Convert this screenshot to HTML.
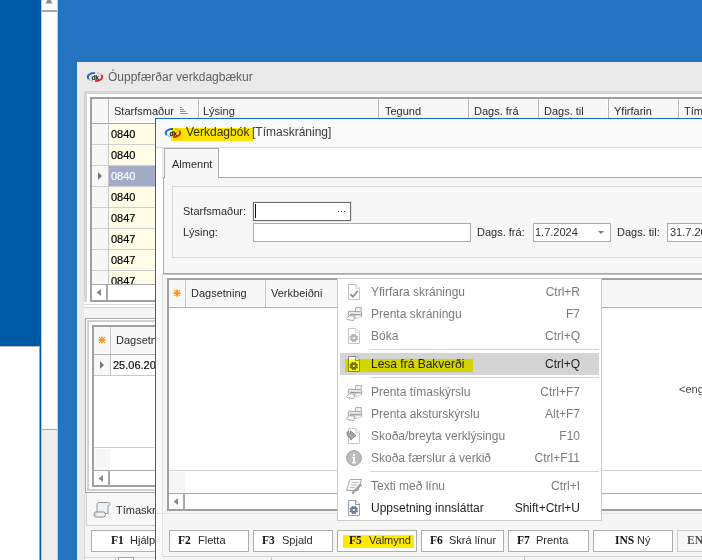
<!DOCTYPE html>
<html><head><meta charset="utf-8">
<style>
html,body{margin:0;padding:0;width:702px;height:560px;overflow:hidden;background:#2574c1;}
body{position:relative;font-family:"Liberation Sans",sans-serif;font-size:11px;color:#222;}
div{position:absolute;box-sizing:border-box;}
.t{white-space:nowrap;line-height:1;}
</style></head><body>
<div style="left:0px;top:0px;width:41px;height:560px;background:#0059a5;"></div>
<div style="left:0px;top:346px;width:40px;height:214px;background:#fff;border-top:1px solid #b8b8b8;border-right:1px solid #8ea6c0;"></div>
<div style="left:41px;top:0px;width:17px;height:560px;background:#fff;border-left:1px solid #cfc8c2;border-right:1px solid #cfc8c2;"></div>
<div style="left:42px;top:10px;width:15px;height:2px;background:#a6a6a6;"></div>
<div style="left:42px;top:429px;width:15px;height:131px;background:#efefef;border-top:1px solid #a6a6a6;"></div>
<svg style="position:absolute;left:45px;top:-3px" width="8" height="7"><path d="M4 0L7.5 6.5H0.5Z" fill="#8a8a8a"/></svg>
<div style="left:77px;top:62px;width:625px;height:498px;background:#eaeaea;"></div>
<svg style="position:absolute;left:86px;top:71px" width="18" height="12" viewBox="0 0 18 12">
<path d="M9 1.8 A7.2 4.2 0 0 0 2.76 8.1" fill="none" stroke="#1f62bd" stroke-width="1.8"/>
<path d="M2.76 8.1 A7.2 4.2 0 0 0 7 10.1" fill="none" stroke="#a8c0e6" stroke-width="1.2"/>
<path d="M9 10.2 A7.2 4.2 0 0 0 15.24 3.9" fill="none" stroke="#e3222b" stroke-width="1.8"/>
<path d="M15.24 3.9 A7.2 4.2 0 0 0 11 1.9" fill="none" stroke="#f2b0b0" stroke-width="1.2"/>
<text x="9" y="8.6" font-family="Liberation Sans" font-weight="bold" font-size="6.8" text-anchor="middle" letter-spacing="-0.4" fill="#151515">dk</text>
</svg>
<div class="t" style="left:108px;top:71px;font-size:12px;color:#5f5f5f;">Óuppfærðar verkdagbækur</div>
<div style="left:84px;top:91px;width:618px;height:217px;background:#d6d6d6;"></div>
<div style="left:87px;top:94px;width:615px;height:211px;background:#fff;"></div>
<div style="left:90px;top:97px;width:612px;height:205px;background:#a0a0a0;"></div>
<div style="left:92px;top:99px;width:610px;height:201px;background:#fff;"></div>
<div style="left:92px;top:99px;width:610px;height:24px;background:#f7f7f7;"></div>
<div style="left:92px;top:122px;width:610px;height:1px;background:#fff;"></div>
<div style="left:92px;top:123px;width:610px;height:1px;background:#a8a8a8;"></div>
<div style="left:107px;top:99px;width:3px;height:23px;background:#fff;"></div>
<div style="left:108px;top:99px;width:1px;height:24px;background:#b4b4b4;"></div>
<div style="left:197px;top:99px;width:3px;height:23px;background:#fff;"></div>
<div style="left:198px;top:99px;width:1px;height:24px;background:#b4b4b4;"></div>
<div style="left:377px;top:99px;width:3px;height:23px;background:#fff;"></div>
<div style="left:378px;top:99px;width:1px;height:24px;background:#b4b4b4;"></div>
<div style="left:467px;top:99px;width:3px;height:23px;background:#fff;"></div>
<div style="left:468px;top:99px;width:1px;height:24px;background:#b4b4b4;"></div>
<div style="left:537px;top:99px;width:3px;height:23px;background:#fff;"></div>
<div style="left:538px;top:99px;width:1px;height:24px;background:#b4b4b4;"></div>
<div style="left:607px;top:99px;width:3px;height:23px;background:#fff;"></div>
<div style="left:608px;top:99px;width:1px;height:24px;background:#b4b4b4;"></div>
<div style="left:677px;top:99px;width:3px;height:23px;background:#fff;"></div>
<div style="left:678px;top:99px;width:1px;height:24px;background:#b4b4b4;"></div>
<div class="t" style="left:114px;top:106px;font-size:11px;color:#2b2b2b;">Starfsmaður</div>
<div style="left:180px;top:107px;width:2px;height:1px;background:#8c8c8c;"></div>
<div style="left:180px;top:109px;width:4px;height:1px;background:#8c8c8c;"></div>
<div style="left:180px;top:111px;width:6px;height:1px;background:#8c8c8c;"></div>
<div style="left:180px;top:113px;width:8px;height:1px;background:#8c8c8c;"></div>
<div class="t" style="left:203px;top:106px;font-size:11px;color:#2b2b2b;">Lýsing</div>
<div class="t" style="left:385px;top:106px;font-size:11px;color:#2b2b2b;">Tegund</div>
<div class="t" style="left:474px;top:106px;font-size:11px;color:#2b2b2b;">Dags. frá</div>
<div class="t" style="left:544px;top:106px;font-size:11px;color:#2b2b2b;">Dags. til</div>
<div class="t" style="left:614px;top:106px;font-size:11px;color:#2b2b2b;">Yfirfarin</div>
<div class="t" style="left:684px;top:106px;font-size:11px;color:#2b2b2b;">Tíma</div>
<div style="left:92px;top:124px;width:16px;height:20px;background:#f7f7f7;"></div>
<div style="left:109px;top:124px;width:50px;height:20px;background:#fffde8;"></div>
<div class="t" style="left:111px;top:129px;font-size:11px;color:#000;-webkit-text-stroke:0.2px currentColor;">0840</div>
<div style="left:92px;top:145px;width:16px;height:20px;background:#f7f7f7;"></div>
<div style="left:109px;top:145px;width:50px;height:20px;background:#fffde8;"></div>
<div class="t" style="left:111px;top:150px;font-size:11px;color:#000;-webkit-text-stroke:0.2px currentColor;">0840</div>
<div style="left:92px;top:166px;width:16px;height:20px;background:#f7f7f7;"></div>
<div style="left:109px;top:166px;width:50px;height:20px;background:#a4abc9;"></div>
<div class="t" style="left:111px;top:171px;font-size:11px;color:#fff;-webkit-text-stroke:0.2px currentColor;">0840</div>
<div style="left:92px;top:187px;width:16px;height:20px;background:#f7f7f7;"></div>
<div style="left:109px;top:187px;width:50px;height:20px;background:#fffde8;"></div>
<div class="t" style="left:111px;top:192px;font-size:11px;color:#000;-webkit-text-stroke:0.2px currentColor;">0840</div>
<div style="left:92px;top:208px;width:16px;height:20px;background:#f7f7f7;"></div>
<div style="left:109px;top:208px;width:50px;height:20px;background:#fffde8;"></div>
<div class="t" style="left:111px;top:213px;font-size:11px;color:#000;-webkit-text-stroke:0.2px currentColor;">0847</div>
<div style="left:92px;top:229px;width:16px;height:20px;background:#f7f7f7;"></div>
<div style="left:109px;top:229px;width:50px;height:20px;background:#fffde8;"></div>
<div class="t" style="left:111px;top:234px;font-size:11px;color:#000;-webkit-text-stroke:0.2px currentColor;">0847</div>
<div style="left:92px;top:250px;width:16px;height:20px;background:#f7f7f7;"></div>
<div style="left:109px;top:250px;width:50px;height:20px;background:#fffde8;"></div>
<div class="t" style="left:111px;top:255px;font-size:11px;color:#000;-webkit-text-stroke:0.2px currentColor;">0847</div>
<div style="left:92px;top:271px;width:16px;height:20px;background:#f7f7f7;"></div>
<div style="left:109px;top:271px;width:50px;height:20px;background:#fffde8;"></div>
<div class="t" style="left:111px;top:276px;font-size:11px;color:#000;-webkit-text-stroke:0.2px currentColor;">0847</div>
<div style="left:92px;top:144px;width:70px;height:1px;background:#d0d0d0;"></div>
<div style="left:92px;top:165px;width:70px;height:1px;background:#d0d0d0;"></div>
<div style="left:92px;top:186px;width:70px;height:1px;background:#d0d0d0;"></div>
<div style="left:92px;top:207px;width:70px;height:1px;background:#d0d0d0;"></div>
<div style="left:92px;top:228px;width:70px;height:1px;background:#d0d0d0;"></div>
<div style="left:92px;top:249px;width:70px;height:1px;background:#d0d0d0;"></div>
<div style="left:92px;top:270px;width:70px;height:1px;background:#d0d0d0;"></div>
<div style="left:92px;top:291px;width:70px;height:1px;background:#d0d0d0;"></div>
<div style="left:108px;top:123px;width:1px;height:161px;background:#c8c8c8;"></div>
<svg style="position:absolute;left:98px;top:172px" width="5" height="8"><path d="M0 0L4 4L0 8Z" fill="#777"/></svg>
<div style="left:92px;top:284px;width:70px;height:1px;background:#a8a8a8;"></div>
<div style="left:92px;top:285px;width:70px;height:15px;background:#fff;"></div>
<div style="left:106px;top:285px;width:2px;height:15px;background:#a8a8a8;"></div>
<svg style="position:absolute;left:96px;top:289px" width="6" height="7"><path d="M5 0L0.5 3.5L5 7Z" fill="#8a8a8a"/></svg>
<div style="left:84px;top:302px;width:618px;height:6px;background:#fff;"></div>
<div style="left:84px;top:304px;width:618px;height:1px;background:#dadada;"></div>
<div style="left:84px;top:307px;width:618px;height:1px;background:#d0d0d0;"></div>
<div style="left:84px;top:308px;width:618px;height:10px;background:#f5f5f5;"></div>
<div style="left:85px;top:318px;width:617px;height:175px;background:#a8a8a8;"></div>
<div style="left:86px;top:319px;width:616px;height:173px;background:#fff;"></div>
<div style="left:87px;top:320px;width:615px;height:171px;background:#d0d0d0;"></div>
<div style="left:89px;top:322px;width:613px;height:167px;background:#fff;"></div>
<div style="left:92px;top:325px;width:610px;height:162px;background:#a0a0a0;"></div>
<div style="left:94px;top:327px;width:608px;height:158px;background:#fff;"></div>
<div style="left:94px;top:327px;width:608px;height:27px;background:#f7f7f7;"></div>
<div style="left:94px;top:353px;width:608px;height:1px;background:#fff;"></div>
<div style="left:109px;top:327px;width:3px;height:26px;background:#fff;"></div>
<div style="left:94px;top:354px;width:608px;height:1px;background:#b0b0b0;"></div>
<div style="left:110px;top:327px;width:1px;height:48px;background:#c0c0c0;"></div>
<svg style="position:absolute;left:97px;top:335px" width="10" height="10" viewBox="-5 -5 10 10">
<g fill="#f7931e"><rect x="-1.8" y="-1.8" width="3.6" height="3.6"/>
<path d="M0 -4.6L1.4 -1.5L-1.4 -1.5Z M0 4.6L1.4 1.5L-1.4 1.5Z M-4.6 0L-1.5 1.4L-1.5 -1.4Z M4.6 0L1.5 1.4L1.5 -1.4Z" opacity="0.85"/>
<circle cx="-2.5" cy="-2.5" r="0.75"/><circle cx="2.5" cy="-2.5" r="0.75"/><circle cx="-2.5" cy="2.5" r="0.75"/><circle cx="2.5" cy="2.5" r="0.75"/></g></svg>
<div class="t" style="left:116px;top:335px;font-size:11px;color:#2b2b2b;">Dagsetning</div>
<div style="left:94px;top:375px;width:70px;height:1px;background:#c8c8c8;"></div>
<div style="left:94px;top:355px;width:16px;height:20px;background:#f7f7f7;"></div>
<svg style="position:absolute;left:100px;top:361px" width="5" height="8"><path d="M0 0L4 4L0 8Z" fill="#777"/></svg>
<div class="t" style="left:113px;top:360px;font-size:11px;color:#111;-webkit-text-stroke:0.2px currentColor;">25.06.20</div>
<div style="left:94px;top:447px;width:70px;height:1px;background:#d0d0d0;"></div>
<div style="left:95px;top:449px;width:15px;height:20px;background:#f6f6f6;"></div>
<div style="left:94px;top:470px;width:70px;height:1px;background:#a8a8a8;"></div>
<div style="left:108px;top:471px;width:2px;height:15px;background:#a8a8a8;"></div>
<svg style="position:absolute;left:98px;top:475px" width="6" height="7"><path d="M5 0L0.5 3.5L5 7Z" fill="#8a8a8a"/></svg>
<div style="left:84px;top:493px;width:71px;height:67px;background:#f5f5f5;"></div>
<div style="left:84px;top:493px;width:1px;height:67px;background:#d8d8d8;"></div>
<div style="left:86px;top:493px;width:80px;height:33px;background:#f8f8f8;border:1px solid #cfcfcf;border-top:none;"></div>
<svg style="position:absolute;left:92px;top:500px" width="20" height="20" viewBox="0 0 20 20">
<path d="M6.5 2.5H16.5Q18.2 2.7 18 4.3Q17.6 5.6 16 5.6V13.5H5V4.2Q5.2 2.5 6.5 2.5Z" fill="#edf2f9" stroke="#969696"/>
<path d="M3.5 12H11.5Q13.6 12.3 13.5 14.5Q13.4 16.8 11.5 17H3.8Q2 16.7 2 14.5Q2.1 12.2 3.5 12Z" fill="#f2f2f2" stroke="#8c8c8c"/>
<path d="M4 13.5Q3.2 14.5 4 15.6" fill="none" stroke="#aaa"/></svg>
<div class="t" style="left:116px;top:505px;font-size:11px;color:#2b2b2b;">Tímaskráning</div>
<div style="left:91px;top:530px;width:70px;height:22px;background:#fff;border:1px solid #b0b0b0;"></div>
<div class="t" style="left:111px;top:535px;font-size:11.5px;color:#111;font-family:'Liberation Serif';font-weight:bold;">F1</div>
<div class="t" style="left:130px;top:535px;font-size:11px;color:#2b2b2b;">Hjálp</div>
<div style="left:85px;top:557px;width:70px;height:1px;background:#d8d8d8;"></div>
<div style="left:115px;top:557px;width:1px;height:3px;background:#c8c8c8;"></div>
<div style="left:118px;top:557px;width:16px;height:3px;background:#fff;border:1px solid #a8a8a8;border-bottom:none;"></div>
<div style="left:155px;top:118px;width:547px;height:442px;background:#fff;border-left:1px solid #0f6ccf;border-top:1px solid #0f6ccf;"></div>
<div style="left:156px;top:119px;width:546px;height:28px;background:#f9f9f9;"></div>
<div style="left:156px;top:147px;width:546px;height:1px;background:#dcdcdc;"></div>
<svg style="position:absolute;left:164px;top:127px" width="18" height="12" viewBox="0 0 18 12">
<path d="M9 1.8 A7.2 4.2 0 0 0 2.76 8.1" fill="none" stroke="#1f62bd" stroke-width="1.8"/>
<path d="M2.76 8.1 A7.2 4.2 0 0 0 7 10.1" fill="none" stroke="#a8c0e6" stroke-width="1.2"/>
<path d="M9 10.2 A7.2 4.2 0 0 0 15.24 3.9" fill="none" stroke="#e3222b" stroke-width="1.8"/>
<path d="M15.24 3.9 A7.2 4.2 0 0 0 11 1.9" fill="none" stroke="#f2b0b0" stroke-width="1.2"/>
<text x="9" y="8.6" font-family="Liberation Sans" font-weight="bold" font-size="6.8" text-anchor="middle" letter-spacing="-0.4" fill="#151515">dk</text>
</svg>
<div class="t" style="left:186px;top:126px;font-size:12px;color:#333;">Verkdagbók</div>
<div style="left:171px;top:128px;width:82px;height:13px;background:#ffe900;mix-blend-mode:multiply;"></div>
<div class="t" style="left:252px;top:126px;font-size:12px;color:#3c3c3c;">[Tímaskráning]</div>
<div style="left:156px;top:148px;width:546px;height:29px;background:#fff;"></div>
<div style="left:163px;top:177px;width:539px;height:97px;background:#f7f7f7;"></div>
<div style="left:163px;top:177px;width:539px;height:1px;background:#a8a8a8;"></div>
<div style="left:163px;top:177px;width:1px;height:97px;background:#a8a8a8;"></div>
<div style="left:163px;top:273px;width:539px;height:1px;background:#a8a8a8;"></div>
<div style="left:164px;top:148px;width:55px;height:30px;background:#f7f7f7;border:1px solid #a8a8a8;border-bottom:none;"></div>
<div style="left:162px;top:148px;width:1px;height:30px;background:#e4e4e4;"></div>
<div class="t" style="left:172px;top:159px;font-size:11px;color:#2b2b2b;">Almennt</div>
<div style="left:172px;top:186px;width:530px;height:72px;background:transparent;border:1px solid #d8d8d8;border-right:none;"></div>
<div class="t" style="left:183px;top:206px;font-size:11px;color:#2b2b2b;">Starfsmaður:</div>
<div class="t" style="left:183px;top:227px;font-size:11px;color:#2b2b2b;">Lýsing:</div>
<div style="left:252px;top:201px;width:100px;height:21px;background:transparent;border:1px solid #e6e6e6;"></div>
<div style="left:253px;top:202px;width:98px;height:19px;background:#fff;border:1px solid #6d6d6d;"></div>
<div style="left:255px;top:204px;width:1px;height:14px;background:#111;"></div>
<div style="left:338px;top:211px;width:1px;height:1px;background:#444;"></div>
<div style="left:341px;top:211px;width:1px;height:1px;background:#444;"></div>
<div style="left:344px;top:211px;width:1px;height:1px;background:#444;"></div>
<div style="left:253px;top:223px;width:218px;height:19px;background:#fff;border:1px solid #acacac;"></div>
<div class="t" style="left:477px;top:227px;font-size:11px;color:#2b2b2b;">Dags. frá:</div>
<div style="left:533px;top:223px;width:78px;height:19px;background:#fff;border:1px solid #acacac;"></div>
<div class="t" style="left:535px;top:227px;font-size:11px;color:#333;">1.7.2024</div>
<svg style="position:absolute;left:598px;top:231px" width="7" height="4"><path d="M0 0H6L3 3Z" fill="#7a7a7a"/></svg>
<div class="t" style="left:617px;top:227px;font-size:11px;color:#2b2b2b;">Dags. til:</div>
<div style="left:667px;top:223px;width:40px;height:19px;background:#fff;border:1px solid #acacac;"></div>
<div class="t" style="left:670px;top:227px;font-size:11px;color:#333;">31.7.2024</div>
<div style="left:156px;top:274px;width:546px;height:286px;background:#f5f5f5;"></div>
<div style="left:163px;top:274px;width:539px;height:4px;background:#fff;"></div>
<div style="left:163px;top:274px;width:539px;height:1px;background:#c4c4c4;"></div>
<div style="left:156px;top:274px;width:6px;height:286px;background:#fafafa;"></div>
<div style="left:162px;top:274px;width:1px;height:282px;background:#e0e0e0;"></div>
<div style="left:167px;top:278px;width:535px;height:233px;background:#a0a0a0;"></div>
<div style="left:169px;top:280px;width:533px;height:229px;background:#fff;"></div>
<div style="left:169px;top:280px;width:533px;height:27px;background:#f7f7f7;"></div>
<div style="left:169px;top:306px;width:533px;height:1px;background:#fff;"></div>
<div style="left:184px;top:280px;width:3px;height:26px;background:#fff;"></div>
<div style="left:264px;top:280px;width:3px;height:26px;background:#fff;"></div>
<div style="left:169px;top:307px;width:533px;height:1px;background:#b0b0b0;"></div>
<div style="left:185px;top:280px;width:1px;height:27px;background:#c0c0c0;"></div>
<div style="left:265px;top:280px;width:1px;height:27px;background:#c0c0c0;"></div>
<svg style="position:absolute;left:172px;top:288px" width="10" height="10" viewBox="-5 -5 10 10">
<g fill="#f7931e"><rect x="-1.8" y="-1.8" width="3.6" height="3.6"/>
<path d="M0 -4.6L1.4 -1.5L-1.4 -1.5Z M0 4.6L1.4 1.5L-1.4 1.5Z M-4.6 0L-1.5 1.4L-1.5 -1.4Z M4.6 0L1.5 1.4L1.5 -1.4Z" opacity="0.85"/>
<circle cx="-2.5" cy="-2.5" r="0.75"/><circle cx="2.5" cy="-2.5" r="0.75"/><circle cx="-2.5" cy="2.5" r="0.75"/><circle cx="2.5" cy="2.5" r="0.75"/></g></svg>
<div class="t" style="left:191px;top:288px;font-size:11px;color:#2b2b2b;">Dagsetning</div>
<div class="t" style="left:271px;top:288px;font-size:11px;color:#2b2b2b;">Verkbeiðni</div>
<div class="t" style="left:679px;top:384px;font-size:11px;color:#444;">&lt;eng</div>
<div style="left:169px;top:470px;width:533px;height:1px;background:#d0d0d0;"></div>
<div style="left:170px;top:472px;width:15px;height:20px;background:#f6f6f6;"></div>
<div style="left:169px;top:493px;width:533px;height:1px;background:#a8a8a8;"></div>
<div style="left:183px;top:494px;width:2px;height:15px;background:#a8a8a8;"></div>
<svg style="position:absolute;left:173px;top:498px" width="6" height="7"><path d="M5 0L0.5 3.5L5 7Z" fill="#8a8a8a"/></svg>
<div style="left:156px;top:513px;width:546px;height:1px;background:#e4e4e4;"></div>
<div style="left:169px;top:530px;width:80px;height:22px;background:#fff;border:1px solid #adadad;"></div>
<div class="t" style="left:178px;top:535px;font-size:11.5px;color:#111;font-family:'Liberation Serif';font-weight:bold;">F2</div>
<div class="t" style="left:198px;top:535px;font-size:11px;color:#2b2b2b;">Fletta</div>
<div style="left:253px;top:530px;width:80px;height:22px;background:#fff;border:1px solid #adadad;"></div>
<div class="t" style="left:262px;top:535px;font-size:11.5px;color:#111;font-family:'Liberation Serif';font-weight:bold;">F3</div>
<div class="t" style="left:282px;top:535px;font-size:11px;color:#2b2b2b;">Spjald</div>
<div style="left:337px;top:530px;width:80px;height:22px;background:#fff;border:1px solid #adadad;"></div>
<div style="left:343px;top:535px;width:71px;height:13px;background:#ffe900;mix-blend-mode:multiply;"></div>
<div class="t" style="left:349px;top:535px;font-size:11.5px;color:#111;font-family:'Liberation Serif';font-weight:bold;">F5</div>
<div class="t" style="left:369px;top:535px;font-size:11px;color:#2b2b2b;">Valmynd</div>
<div style="left:421px;top:530px;width:83px;height:22px;background:#fff;border:1px solid #adadad;"></div>
<div class="t" style="left:430px;top:535px;font-size:11.5px;color:#111;font-family:'Liberation Serif';font-weight:bold;">F6</div>
<div class="t" style="left:449px;top:535px;font-size:11px;color:#2b2b2b;">Skrá línur</div>
<div style="left:508px;top:530px;width:81px;height:22px;background:#fff;border:1px solid #adadad;"></div>
<div class="t" style="left:517px;top:535px;font-size:11.5px;color:#111;font-family:'Liberation Serif';font-weight:bold;">F7</div>
<div class="t" style="left:536px;top:535px;font-size:11px;color:#2b2b2b;">Prenta</div>
<div style="left:593px;top:530px;width:80px;height:22px;background:#fff;border:1px solid #adadad;"></div>
<div class="t" style="left:615px;top:535px;font-size:11.5px;color:#111;font-family:'Liberation Serif';font-weight:bold;">INS</div>
<div class="t" style="left:637px;top:535px;font-size:11px;color:#2b2b2b;">Ný</div>
<div style="left:677px;top:530px;width:40px;height:22px;background:#f7f7f7;border:1px solid #cbcbcb;"></div>
<div class="t" style="left:687px;top:535px;font-size:11.5px;color:#555;font-family:'Liberation Serif';font-weight:bold;">EN</div>
<div style="left:163px;top:556px;width:539px;height:1px;background:#d4d4d4;"></div>
<div style="left:271px;top:557px;width:1px;height:3px;background:#c8c8c8;"></div>
<div style="left:524px;top:557px;width:1px;height:3px;background:#c8c8c8;"></div>
<div style="left:337px;top:278px;width:265px;height:243px;background:#fff;border:1px solid #cccccc;"></div>
<div style="left:370px;top:349px;width:229px;height:1px;background:#d4d4d4;"></div>
<div style="left:370px;top:377px;width:229px;height:1px;background:#d4d4d4;"></div>
<div style="left:370px;top:471px;width:229px;height:1px;background:#d4d4d4;"></div>
<div style="left:340px;top:353px;width:259px;height:22px;background:#d4d4d4;"></div>
<svg style="position:absolute;left:348px;top:284px" width="14" height="17" viewBox="0 0 14 17"><path d="M0.5 0.5H8L11.5 4V15.5H0.5Z" fill="#fff" stroke="#c4c4c4"/><path d="M7.5 0.5V4.5H11.5" fill="#f0f0f0" stroke="#dcdcdc"/><path d="M2.3 10.2L4.8 12.8L9.8 7" fill="none" stroke="#8c8c8c" stroke-width="1.7"/></svg>
<div class="t" style="left:371px;top:286px;font-size:12px;color:#7b7b7b;">Yfirfara skráningu</div>
<div class="t" style="right:122px;top:286px;font-size:12px;color:#7b7b7b;text-align:right">Ctrl+R</div>
<svg style="position:absolute;left:344px;top:304px" width="20" height="20" viewBox="0 0 20 20">
<path d="M11.8 3.5H17.5L17 7.8H11.2Z" fill="#efefef" stroke="#b0b0b0" stroke-linejoin="round"/>
<path d="M5 7.2Q4.2 7.3 4.3 8.3V12.6L11.5 14.3L17.6 12.8V8.6Q17.6 7.8 16.8 7.8Z" fill="#e9e9e9" stroke="#a6a6a6" stroke-linejoin="round"/>
<path d="M6.2 10.3L17.2 10.8" stroke="#9a9a9a" stroke-width="1.2"/>
<path d="M12.5 11.8H17V13.2L12.5 14Z" fill="#fafafa"/>
<path d="M2.3 14.6L5.6 11.6L10.8 12.2L9.6 16.6L3.2 15.6Z" fill="#fbfbfb" stroke="#a8a8a8" stroke-linejoin="round"/></svg>
<div class="t" style="left:371px;top:308px;font-size:12px;color:#7b7b7b;">Prenta skráningu</div>
<div class="t" style="right:122px;top:308px;font-size:12px;color:#7b7b7b;text-align:right">F7</div>
<svg style="position:absolute;left:348px;top:328px" width="14" height="17" viewBox="0 0 14 17"><path d="M0.5 0.5H8L11.5 4V15.5H0.5Z" fill="#fff" stroke="#c4c4c4"/><path d="M7.5 0.5V4.5H11.5" fill="#f0f0f0" stroke="#dcdcdc"/><circle cx="5.8" cy="10" r="3.4" fill="#b4b4b4"/><circle cx="9.13" cy="11.38" r="0.9" fill="#b4b4b4"/><circle cx="7.18" cy="13.33" r="0.9" fill="#b4b4b4"/><circle cx="4.42" cy="13.33" r="0.9" fill="#b4b4b4"/><circle cx="2.47" cy="11.38" r="0.9" fill="#b4b4b4"/><circle cx="2.47" cy="8.62" r="0.9" fill="#b4b4b4"/><circle cx="4.42" cy="6.67" r="0.9" fill="#b4b4b4"/><circle cx="7.18" cy="6.67" r="0.9" fill="#b4b4b4"/><circle cx="9.13" cy="8.62" r="0.9" fill="#b4b4b4"/><rect x="4.8" y="9" width="2" height="2" fill="#fff"/></svg>
<div class="t" style="left:371px;top:330px;font-size:12px;color:#7b7b7b;">Bóka</div>
<div class="t" style="right:122px;top:330px;font-size:12px;color:#7b7b7b;text-align:right">Ctrl+Q</div>
<svg style="position:absolute;left:348px;top:356px" width="14" height="17" viewBox="0 0 14 17"><path d="M0.5 0.5H8L11.5 4V15.5H0.5Z" fill="#fff" stroke="#8a8a8a"/><path d="M7.5 0.5V4.5H11.5" fill="#f0f0f0" stroke="#9a9a9a"/><circle cx="5.8" cy="10" r="3.4" fill="#707070"/><circle cx="9.13" cy="11.38" r="0.9" fill="#707070"/><circle cx="7.18" cy="13.33" r="0.9" fill="#707070"/><circle cx="4.42" cy="13.33" r="0.9" fill="#707070"/><circle cx="2.47" cy="11.38" r="0.9" fill="#707070"/><circle cx="2.47" cy="8.62" r="0.9" fill="#707070"/><circle cx="4.42" cy="6.67" r="0.9" fill="#707070"/><circle cx="7.18" cy="6.67" r="0.9" fill="#707070"/><circle cx="9.13" cy="8.62" r="0.9" fill="#707070"/><rect x="4.8" y="9" width="2" height="2" fill="#fff"/></svg>
<div class="t" style="left:371px;top:358px;font-size:12px;color:#1f1f1f;">Lesa frá Bakverði</div>
<div class="t" style="right:122px;top:358px;font-size:12px;color:#1f1f1f;text-align:right">Ctrl+Q</div>
<svg style="position:absolute;left:344px;top:382px" width="20" height="20" viewBox="0 0 20 20">
<path d="M11.8 3.5H17.5L17 7.8H11.2Z" fill="#efefef" stroke="#b0b0b0" stroke-linejoin="round"/>
<path d="M5 7.2Q4.2 7.3 4.3 8.3V12.6L11.5 14.3L17.6 12.8V8.6Q17.6 7.8 16.8 7.8Z" fill="#e9e9e9" stroke="#a6a6a6" stroke-linejoin="round"/>
<path d="M6.2 10.3L17.2 10.8" stroke="#9a9a9a" stroke-width="1.2"/>
<path d="M12.5 11.8H17V13.2L12.5 14Z" fill="#fafafa"/>
<path d="M2.3 14.6L5.6 11.6L10.8 12.2L9.6 16.6L3.2 15.6Z" fill="#fbfbfb" stroke="#a8a8a8" stroke-linejoin="round"/></svg>
<div class="t" style="left:371px;top:386px;font-size:12px;color:#7b7b7b;">Prenta tímaskýrslu</div>
<div class="t" style="right:122px;top:386px;font-size:12px;color:#7b7b7b;text-align:right">Ctrl+F7</div>
<svg style="position:absolute;left:344px;top:404px" width="20" height="20" viewBox="0 0 20 20">
<path d="M11.8 3.5H17.5L17 7.8H11.2Z" fill="#efefef" stroke="#b0b0b0" stroke-linejoin="round"/>
<path d="M5 7.2Q4.2 7.3 4.3 8.3V12.6L11.5 14.3L17.6 12.8V8.6Q17.6 7.8 16.8 7.8Z" fill="#e9e9e9" stroke="#a6a6a6" stroke-linejoin="round"/>
<path d="M6.2 10.3L17.2 10.8" stroke="#9a9a9a" stroke-width="1.2"/>
<path d="M12.5 11.8H17V13.2L12.5 14Z" fill="#fafafa"/>
<path d="M2.3 14.6L5.6 11.6L10.8 12.2L9.6 16.6L3.2 15.6Z" fill="#fbfbfb" stroke="#a8a8a8" stroke-linejoin="round"/></svg>
<div class="t" style="left:371px;top:408px;font-size:12px;color:#7b7b7b;">Prenta aksturskýrslu</div>
<div class="t" style="right:122px;top:408px;font-size:12px;color:#7b7b7b;text-align:right">Alt+F7</div>
<svg style="position:absolute;left:346px;top:428px" width="16" height="17" viewBox="0 0 16 17"><path d="M2.5 0.5H10L13.5 4V15.5H2.5Z" fill="#fff" stroke="#c8c8c8"/><path d="M9.5 0.5V4.5H13.5" fill="#f0f0f0" stroke="#dcdcdc"/><path d="M1 4.5Q1 9 3.5 9.5H4.5V12L10 7.5L4.5 3V5.5H3.5Q2.5 5.5 2.5 3Z" fill="#a8a8a8" stroke="#7a7a7a" stroke-width="0.9"/></svg>
<div class="t" style="left:371px;top:430px;font-size:12px;color:#7b7b7b;">Skoða/breyta verklýsingu</div>
<div class="t" style="right:122px;top:430px;font-size:12px;color:#7b7b7b;text-align:right">F10</div>
<svg style="position:absolute;left:346px;top:450px" width="16" height="16" viewBox="0 0 16 16">
<circle cx="8" cy="8" r="7.4" fill="#bcbcbc" stroke="#a6a6a6"/>
<rect x="7" y="4" width="2" height="1.8" fill="#fff"/><path d="M6.5 6.8H9V12H10V13.5H6V12H7V8H6.5Z" fill="#fff"/></svg>
<div class="t" style="left:371px;top:452px;font-size:12px;color:#7b7b7b;">Skoða færslur á verkið</div>
<div class="t" style="right:122px;top:452px;font-size:12px;color:#7b7b7b;text-align:right">Ctrl+F11</div>
<svg style="position:absolute;left:344px;top:478px" width="20" height="20" viewBox="0 0 20 20">
<path d="M6 1.5H17.5L14 12.5H2.5Z" fill="#f7f7f7" stroke="#a8a8a8"/>
<path d="M8 4.5H14.5M7 7H13.5M6 9.5H11" stroke="#bdbdbd"/>
<path d="M17.5 7L10 14.5L8.5 15.5L9 13.8L16.3 6Z" fill="#d6d6d6" stroke="#7e7e7e"/></svg>
<div class="t" style="left:371px;top:480px;font-size:12px;color:#7b7b7b;">Texti með línu</div>
<div class="t" style="right:122px;top:480px;font-size:12px;color:#7b7b7b;text-align:right">Ctrl+I</div>
<svg style="position:absolute;left:348px;top:500px" width="14" height="17" viewBox="0 0 14 17"><path d="M0.5 0.5H8L11.5 4V15.5H0.5Z" fill="#fff" stroke="#9aa0a8"/><path d="M7.5 0.5V4.5H11.5" fill="#f0f0f0" stroke="#8a8f96"/><circle cx="5.8" cy="10" r="3.4" fill="#6a8098"/><circle cx="9.13" cy="11.38" r="0.9" fill="#6a8098"/><circle cx="7.18" cy="13.33" r="0.9" fill="#6a8098"/><circle cx="4.42" cy="13.33" r="0.9" fill="#6a8098"/><circle cx="2.47" cy="11.38" r="0.9" fill="#6a8098"/><circle cx="2.47" cy="8.62" r="0.9" fill="#6a8098"/><circle cx="4.42" cy="6.67" r="0.9" fill="#6a8098"/><circle cx="7.18" cy="6.67" r="0.9" fill="#6a8098"/><circle cx="9.13" cy="8.62" r="0.9" fill="#6a8098"/><rect x="4.8" y="9" width="2" height="2" fill="#fff"/></svg>
<div class="t" style="left:371px;top:502px;font-size:12px;color:#1f1f1f;">Uppsetning innsláttar</div>
<div class="t" style="right:122px;top:502px;font-size:12px;color:#1f1f1f;text-align:right">Shift+Ctrl+U</div>
<div style="left:345px;top:359px;width:128px;height:13px;background:#ffff00;mix-blend-mode:multiply;"></div>
</body></html>
